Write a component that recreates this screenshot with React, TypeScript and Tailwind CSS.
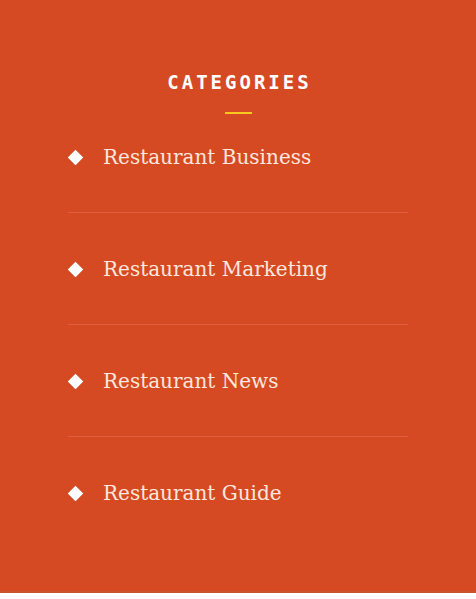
import React from "react";

const items = [
  "Restaurant Business",
  "Restaurant Marketing",
  "Restaurant News",
  "Restaurant Guide",
];

export default function App() {
  return (
    <div className="w-[476px] h-[599px] bg-white">
      <div className="h-[593px] bg-[#d54a22] border-b-[2px] border-[#c9532f] pt-[70px]">
        <h2
          className="text-center text-white font-bold text-[19px] leading-[24px] tracking-[3px] pl-[3px]"
          style={{ fontFamily: '"DejaVu Sans Mono", monospace' }}
        >
          CATEGORIES
        </h2>
        <div className="mx-auto mt-[18px] w-[27px] h-[2px] bg-[#f7c81e]" />
        <ul className="px-[68px]">
          {items.map((t, i) => (
            <li
              key={t}
              className={`flex items-center pb-[40px] ${i === 0 ? "pt-[28px]" : "pt-[41px]"} ${
                i < items.length - 1 ? "border-b border-[#dc603c]" : ""
              }`}
            >
              <span className="w-[14px] h-[30px] flex items-center justify-center">
                <span className="block w-[11px] h-[11px] bg-white rotate-45" />
              </span>
              <span
                className="ml-[21px] text-[20px] leading-[30px] text-[#fbe7de]"
                style={{ fontFamily: '"DejaVu Serif", serif' }}
              >
                {t}
              </span>
            </li>
          ))}
        </ul>
      </div>
    </div>
  );
}
